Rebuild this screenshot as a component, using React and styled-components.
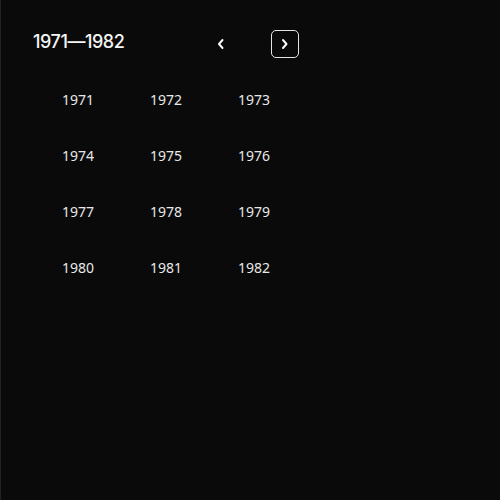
import React from "react";
import styled, { createGlobalStyle } from "styled-components";

const Global = createGlobalStyle`
  html, body { margin: 0; padding: 0; background: #0a0a0a; }
  body { font-family: Inter, "Noto Sans", sans-serif; }
`;

const Page = styled.div`
  box-sizing: border-box;
  width: 500px;
  height: 500px;
  background: #0a0a0a;
  border-left: 1px solid #222;
  padding: 30px 0 0 32px;
`;

const Picker = styled.div`
  width: 266px;
  display: flex;
  flex-direction: column;
  gap: 13px;
`;

const Header = styled.div`
  display: flex;
  align-items: center;
  height: 28px;
`;

const Title = styled.div`
  flex: 1;
  color: #f5f5f5;
  font-size: 18px;
  font-weight: 500;
  letter-spacing: -0.45px;
  padding-bottom: 5px;
`;

const NavButton = styled.button`
  box-sizing: border-box;
  width: 28px;
  height: 28px;
  margin-left: ${(p) => p.$gap || 0}px;
  display: flex;
  align-items: center;
  justify-content: center;
  background: transparent;
  color: #fafafa;
  border: 1.5px solid ${(p) => (p.$focused ? "#e5e5e5" : "transparent")};
  border-radius: 5px;
  padding: 0;
  cursor: pointer;
`;

const Grid = styled.div`
  display: grid;
  grid-template-columns: repeat(3, 88px);
  grid-auto-rows: 56px;
  margin-left: 1px;
`;

const Year = styled.div`
  display: flex;
  align-items: center;
  justify-content: center;
  color: #e8e8e8;
  font-family: "Noto Sans", sans-serif;
  font-size: 14px;
  font-weight: 400;
`;

const Chevron = ({ dir }) => (
  <svg width="16" height="16" viewBox="0 0 16 16" fill="none" stroke="currentColor" strokeWidth="2" strokeLinecap="round" strokeLinejoin="round">
    {dir === "left" ? <path d="M10.5 4 7 8l3.5 4" /> : <path d="M6 4l3.5 4L6 12" />}
  </svg>
);

export default function App() {
  const years = Array.from({ length: 12 }, (_, i) => 1971 + i);
  return (
    <>
      <Global />
      <Page>
        <Picker>
          <Header>
            <Title>1971—1982</Title>
            <NavButton aria-label="Previous">
              <Chevron dir="left" />
            </NavButton>
            <NavButton aria-label="Next" $focused $gap={37}>
              <Chevron dir="right" />
            </NavButton>
          </Header>
          <Grid>
            {years.map((y) => (
              <Year key={y}>{y}</Year>
            ))}
          </Grid>
        </Picker>
      </Page>
    </>
  );
}
